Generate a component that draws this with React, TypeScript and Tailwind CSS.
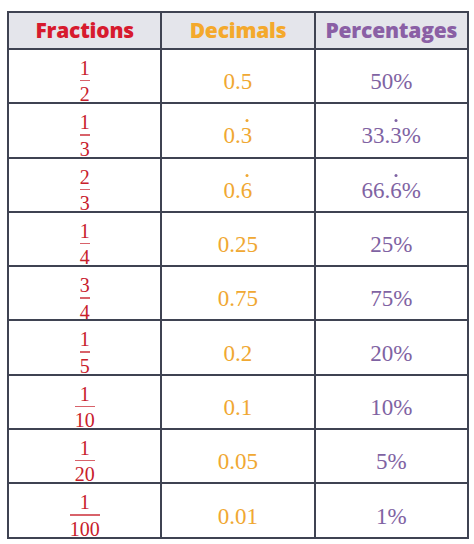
import React from 'react';

type Row = {
  num: string;
  den: string;
  dec: [string, string?];
  pct: [string, string?, string?];
};

const rows: Row[] = [
  { num: '1', den: '2', dec: ['0.5'], pct: ['50%'] },
  { num: '1', den: '3', dec: ['0.', '3'], pct: ['33.', '3', '%'] },
  { num: '2', den: '3', dec: ['0.', '6'], pct: ['66.', '6', '%'] },
  { num: '1', den: '4', dec: ['0.25'], pct: ['25%'] },
  { num: '3', den: '4', dec: ['0.75'], pct: ['75%'] },
  { num: '1', den: '5', dec: ['0.2'], pct: ['20%'] },
  { num: '1', den: '10', dec: ['0.1'], pct: ['10%'] },
  { num: '1', den: '20', dec: ['0.05'], pct: ['5%'] },
  { num: '1', den: '100', dec: ['0.01'], pct: ['1%'] },
];

const serif = { fontFamily: '"Liberation Serif", "DejaVu Serif", serif' };
const sans = { fontFamily: '"Open Sans", Lato, sans-serif' };

const Dotted = ({ d }: { d: string }) => (
  <span className="relative inline-block">
    {d}
    <span className="absolute left-1/2 top-[-5px] h-[3px] w-[3px] -translate-x-1/2 rounded-full bg-current" />
  </span>
);

const Fraction = ({ num, den }: { num: string; den: string }) => (
  <span className="inline-flex flex-col items-center text-[20px] leading-[16px] text-[#c8202b]">
    <span className="pb-[4px]">{num}</span>
    <span className="h-[1.5px] w-full min-w-[9px] bg-[#c8202b] opacity-70" />
    <span className="pt-[5px]">{den}</span>
  </span>
);

export default function App() {
  return (
    <div className="w-[474px] h-[544px] bg-white pt-[11px] pl-[7px]">
      <div
        className="w-[462px] grid grid-cols-3 grid-rows-[35px_repeat(9,52.3px)] gap-[2px] border-2 border-[#3f4352] bg-[#3f4352]"
        style={serif}
      >
        <div className="flex items-center justify-center bg-[#e4e5eb] text-[21px] font-extrabold tracking-[-0.2px] text-[#d71a2e]" style={sans}>
          Fractions
        </div>
        <div className="flex items-center justify-center bg-[#e4e5eb] text-[21px] font-extrabold tracking-[-0.2px] text-[#f4a92c]" style={sans}>
          Decimals
        </div>
        <div className="flex items-center justify-center bg-[#e4e5eb] text-[21px] font-extrabold tracking-[-0.2px] text-[#8a5fa5]" style={sans}>
          Percentages
        </div>
        {rows.map((r, i) => (
          <React.Fragment key={i}>
            <div className="flex items-center justify-center bg-white pt-[10px]">
              <Fraction num={r.num} den={r.den} />
            </div>
            <div className="flex items-center justify-center bg-white pt-[11px] text-[23px] leading-none text-[#f0a832]">
              <span>
                {r.dec[0]}
                {r.dec[1] && <Dotted d={r.dec[1]} />}
              </span>
            </div>
            <div className="flex items-center justify-center bg-white pt-[11px] text-[23px] leading-none text-[#7f63a3]">
              <span>
                {r.pct[0]}
                {r.pct[1] && <Dotted d={r.pct[1]} />}
                {r.pct[2]}
              </span>
            </div>
          </React.Fragment>
        ))}
      </div>
    </div>
  );
}
